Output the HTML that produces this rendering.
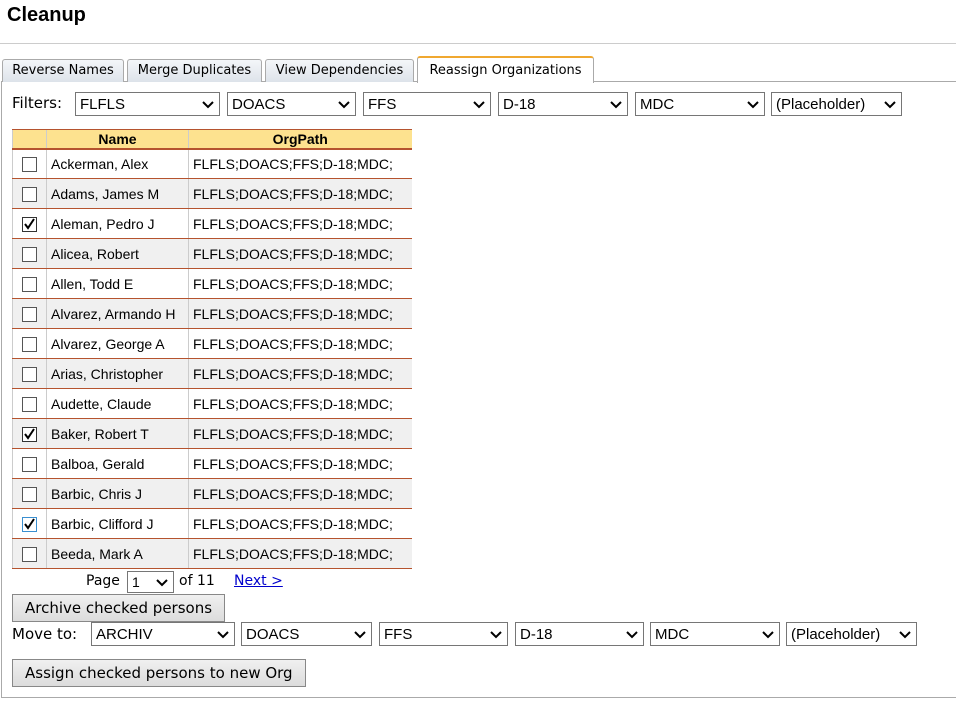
<!DOCTYPE html>
<html><head><meta charset="utf-8"><style>
*{box-sizing:border-box}
body{margin:0;width:956px;height:702px;background:#fff;font-family:"DejaVu Sans",Verdana,sans-serif;color:#000;position:relative;overflow:hidden}
.abs{position:absolute}
h1{position:absolute;left:7px;top:4px;margin:0;font:bold 20px "Liberation Sans",Arial,sans-serif}
.hr{position:absolute;left:0;top:43px;width:956px;height:1px;background:#ccc}
.tab{position:absolute;top:59px;height:23px;border:1px solid #aaa;border-bottom:none;background:linear-gradient(#f4f6f9,#dde3ea);font-size:13px;padding:3px 0 0;text-align:center;border-radius:3px 3px 0 0}
.tab.act{background:#fff;border-top:2px solid #f0a830;top:56px;height:27px;padding-top:5px}
.panel{position:absolute;left:1px;top:81px;width:956px;height:617px;border:1px solid #aaa;border-right:none}
.sel{position:absolute;height:24px;border:1px solid #767676;background:#fff;font:15px "Liberation Sans",Arial,sans-serif;padding:3px 0 0 4px}
.sel svg{position:absolute;right:5px;top:8px}
.lbl{position:absolute;font-size:15px}
table{position:absolute;left:12px;top:129px;border-collapse:collapse;font:14px "Liberation Sans",Arial,sans-serif}
td,th{height:30px;padding:0 4px;border-left:1px solid #ccc;border-bottom:1px solid #b5532e;white-space:nowrap}
th{height:19px;background:#fde28f;font-weight:bold;text-align:center;border-top:1px solid #b5532e;border-bottom:2px solid #b5532e}
tr.alt td{background:#f0f0f0}
td.cb{width:34px;text-align:center;padding:0}
.box{display:inline-block;width:15px;height:15px;border:1px solid #555;background:#fff;vertical-align:middle;position:relative}
.box.ck{border-color:#333}
.btn{position:absolute;left:12px;height:28px;border:1px solid #888;background:linear-gradient(#f0f0f0,#dcdcdc);font-size:15px;padding:4px 0 0 12px}
a{color:#00c}
</style></head><body>
<h1>Cleanup</h1>
<div class="hr"></div>
<div class="panel"></div>
<div class="tab" style="left:2px;width:122px">Reverse Names</div>
<div class="tab" style="left:127px;width:135px">Merge Duplicates</div>
<div class="tab" style="left:265px;width:149px">View Dependencies</div>
<div class="tab act" style="left:417px;width:177px">Reassign Organizations</div>

<div class="lbl" style="left:12px;top:94px">Filters:</div>
<div class="sel" style="left:75px;top:92px;width:145px">FLFLS<svg width="12" height="8"><path d="M1 1l5 5 5-5" fill="none" stroke="#000" stroke-width="2"/></svg></div>
<div class="sel" style="left:227px;top:92px;width:129px">DOACS<svg width="12" height="8"><path d="M1 1l5 5 5-5" fill="none" stroke="#000" stroke-width="2"/></svg></div>
<div class="sel" style="left:363px;top:92px;width:128px">FFS<svg width="12" height="8"><path d="M1 1l5 5 5-5" fill="none" stroke="#000" stroke-width="2"/></svg></div>
<div class="sel" style="left:498px;top:92px;width:130px">D-18<svg width="12" height="8"><path d="M1 1l5 5 5-5" fill="none" stroke="#000" stroke-width="2"/></svg></div>
<div class="sel" style="left:635px;top:92px;width:130px">MDC<svg width="12" height="8"><path d="M1 1l5 5 5-5" fill="none" stroke="#000" stroke-width="2"/></svg></div>
<div class="sel" style="left:771px;top:92px;width:131px">(Placeholder)<svg width="12" height="8"><path d="M1 1l5 5 5-5" fill="none" stroke="#000" stroke-width="2"/></svg></div>

<table>
<tr><th style="width:34px"></th><th style="width:142px">Name</th><th style="width:223px">OrgPath</th></tr>
<tr><td class="cb"><span class="box"></span></td><td>Ackerman, Alex</td><td>FLFLS;DOACS;FFS;D-18;MDC;</td></tr>
<tr class="alt"><td class="cb"><span class="box"></span></td><td>Adams, James M</td><td>FLFLS;DOACS;FFS;D-18;MDC;</td></tr>
<tr><td class="cb"><span class="box ck"><svg width="13" height="13" style="position:absolute;left:0;top:0"><path d="M2 6l3 4 6-9" fill="none" stroke="#000" stroke-width="2"/></svg></span></td><td>Aleman, Pedro J</td><td>FLFLS;DOACS;FFS;D-18;MDC;</td></tr>
<tr class="alt"><td class="cb"><span class="box"></span></td><td>Alicea, Robert</td><td>FLFLS;DOACS;FFS;D-18;MDC;</td></tr>
<tr><td class="cb"><span class="box"></span></td><td>Allen, Todd E</td><td>FLFLS;DOACS;FFS;D-18;MDC;</td></tr>
<tr class="alt"><td class="cb"><span class="box"></span></td><td>Alvarez, Armando H</td><td>FLFLS;DOACS;FFS;D-18;MDC;</td></tr>
<tr><td class="cb"><span class="box"></span></td><td>Alvarez, George A</td><td>FLFLS;DOACS;FFS;D-18;MDC;</td></tr>
<tr class="alt"><td class="cb"><span class="box"></span></td><td>Arias, Christopher</td><td>FLFLS;DOACS;FFS;D-18;MDC;</td></tr>
<tr><td class="cb"><span class="box"></span></td><td>Audette, Claude</td><td>FLFLS;DOACS;FFS;D-18;MDC;</td></tr>
<tr class="alt"><td class="cb"><span class="box ck"><svg width="13" height="13" style="position:absolute;left:0;top:0"><path d="M2 6l3 4 6-9" fill="none" stroke="#000" stroke-width="2"/></svg></span></td><td>Baker, Robert T</td><td>FLFLS;DOACS;FFS;D-18;MDC;</td></tr>
<tr><td class="cb"><span class="box"></span></td><td>Balboa, Gerald</td><td>FLFLS;DOACS;FFS;D-18;MDC;</td></tr>
<tr class="alt"><td class="cb"><span class="box"></span></td><td>Barbic, Chris J</td><td>FLFLS;DOACS;FFS;D-18;MDC;</td></tr>
<tr><td class="cb"><span class="box ck" style="border-color:#3a8fd0"><svg width="13" height="13" style="position:absolute;left:0;top:0"><path d="M2 6l3 4 6-9" fill="none" stroke="#000" stroke-width="2"/></svg></span></td><td>Barbic, Clifford J</td><td>FLFLS;DOACS;FFS;D-18;MDC;</td></tr>
<tr class="alt"><td class="cb"><span class="box"></span></td><td>Beeda, Mark A</td><td>FLFLS;DOACS;FFS;D-18;MDC;</td></tr>
</table>

<div class="lbl" style="left:86px;top:573px;font-size:14px">Page</div>
<div class="sel" style="left:127px;top:571px;width:47px;height:22px;padding-top:2px;font-size:14px">1<svg width="12" height="8" style="top:7px"><path d="M1 1l5 5 5-5" fill="none" stroke="#000" stroke-width="2"/></svg></div>
<div class="lbl" style="left:179px;top:573px;font-size:14px">of 11</div>
<div class="lbl" style="left:234px;top:573px;font-size:14px"><a href="#">Next &gt;</a></div>

<div class="btn" style="top:594px;width:213px">Archive checked persons</div>

<div class="lbl" style="left:12px;top:625px">Move to:</div>
<div class="sel" style="left:91px;top:622px;width:144px">ARCHIV<svg width="12" height="8"><path d="M1 1l5 5 5-5" fill="none" stroke="#000" stroke-width="2"/></svg></div>
<div class="sel" style="left:241px;top:622px;width:131px">DOACS<svg width="12" height="8"><path d="M1 1l5 5 5-5" fill="none" stroke="#000" stroke-width="2"/></svg></div>
<div class="sel" style="left:379px;top:622px;width:129px">FFS<svg width="12" height="8"><path d="M1 1l5 5 5-5" fill="none" stroke="#000" stroke-width="2"/></svg></div>
<div class="sel" style="left:515px;top:622px;width:129px">D-18<svg width="12" height="8"><path d="M1 1l5 5 5-5" fill="none" stroke="#000" stroke-width="2"/></svg></div>
<div class="sel" style="left:650px;top:622px;width:130px">MDC<svg width="12" height="8"><path d="M1 1l5 5 5-5" fill="none" stroke="#000" stroke-width="2"/></svg></div>
<div class="sel" style="left:786px;top:622px;width:131px">(Placeholder)<svg width="12" height="8"><path d="M1 1l5 5 5-5" fill="none" stroke="#000" stroke-width="2"/></svg></div>

<div class="btn" style="top:659px;width:294px">Assign checked persons to new Org</div>
</body></html>
